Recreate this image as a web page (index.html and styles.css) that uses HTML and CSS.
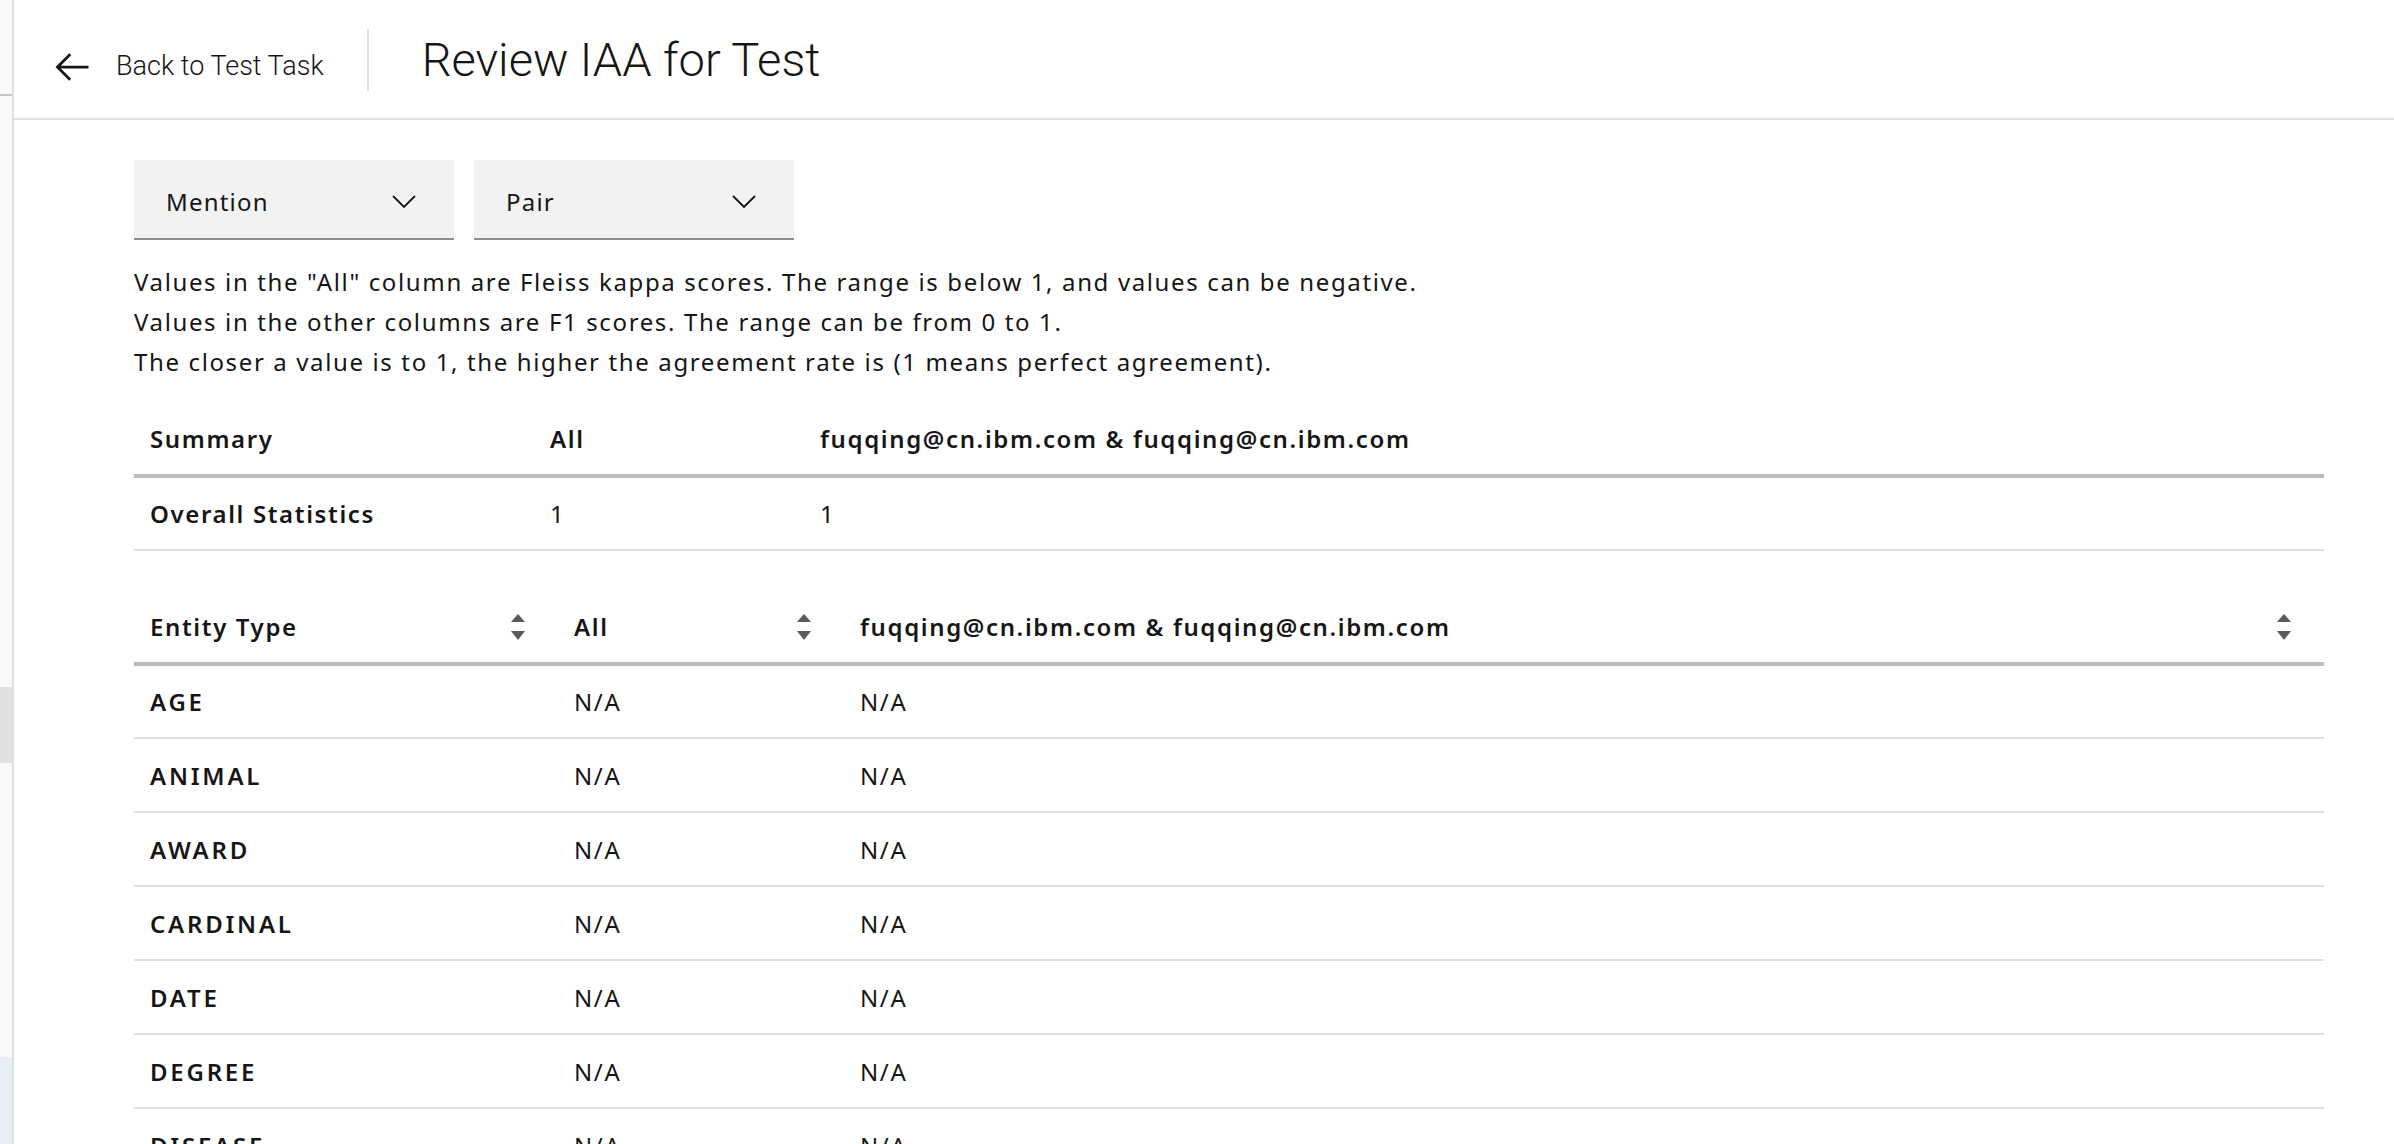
FILE: index.html
```html
<!DOCTYPE html>
<html lang="en">
<head>
<meta charset="utf-8">
<title>Review IAA for Test</title>
<link rel="stylesheet" href="styles.css">
</head>
<body>
<div class="app">
  <aside class="rail">
    <div class="rail-top"></div>
    <div class="rail-space-a"></div>
    <div class="rail-block"></div>
    <div class="rail-space-b"></div>
    <div class="rail-active"></div>
  </aside>
  <main class="main">
    <header class="page-header">
      <a class="back-link" href="#">
        <svg class="back-icon" viewBox="0 0 32 32" aria-hidden="true"><path d="M14 26l1.41-1.41L7.83 17H28v-2H7.83l7.58-7.59L14 6 4 16 14 26z"/></svg>
        <span>Back to Test Task</span>
      </a>
      <div class="header-divider"></div>
      <h1 class="page-title">Review IAA for Test</h1>
    </header>
    <section class="content">
      <div class="filters">
        <div class="dropdown"><span>Mention</span><svg class="chevron" viewBox="0 0 24 13" aria-hidden="true"><polyline points="1,1 12,12 23,1"/></svg></div>
        <div class="dropdown"><span>Pair</span><svg class="chevron" viewBox="0 0 24 13" aria-hidden="true"><polyline points="1,1 12,12 23,1"/></svg></div>
      </div>
      <p class="note">Values in the "All" column are Fleiss kappa scores. The range is below 1, and values can be negative.<br>Values in the other columns are F1 scores. The range can be from 0 to 1.<br>The closer a value is to 1, the higher the agreement rate is (1 means perfect agreement).</p>

      <table class="data-table summary-table">
        <thead>
          <tr><th class="c1">Summary</th><th class="c2">All</th><th>fuqqing@cn.ibm.com &amp; fuqqing@cn.ibm.com</th></tr>
        </thead>
        <tbody>
          <tr><td class="name">Overall Statistics</td><td>1</td><td>1</td></tr>
        </tbody>
      </table>

      <table class="data-table entity-table">
        <thead>
          <tr>
            <th class="e1"><div class="th-inner"><span>Entity Type</span><svg class="sort" viewBox="0 0 14 26" aria-hidden="true"><polygon points="0,8 7,0 14,8"/><polygon points="0,17 14,17 7,26"/></svg></div></th>
            <th class="e2"><div class="th-inner"><span>All</span><svg class="sort" viewBox="0 0 14 26" aria-hidden="true"><polygon points="0,8 7,0 14,8"/><polygon points="0,17 14,17 7,26"/></svg></div></th>
            <th><div class="th-inner"><span>fuqqing@cn.ibm.com &amp; fuqqing@cn.ibm.com</span><svg class="sort" viewBox="0 0 14 26" aria-hidden="true"><polygon points="0,8 7,0 14,8"/><polygon points="0,17 14,17 7,26"/></svg></div></th>
          </tr>
        </thead>
        <tbody>
          <tr><td class="name">AGE</td><td>N/A</td><td>N/A</td></tr>
          <tr><td class="name">ANIMAL</td><td>N/A</td><td>N/A</td></tr>
          <tr><td class="name">AWARD</td><td>N/A</td><td>N/A</td></tr>
          <tr><td class="name">CARDINAL</td><td>N/A</td><td>N/A</td></tr>
          <tr><td class="name">DATE</td><td>N/A</td><td>N/A</td></tr>
          <tr><td class="name">DEGREE</td><td>N/A</td><td>N/A</td></tr>
          <tr><td class="name">DISEASE</td><td>N/A</td><td>N/A</td></tr>
          <tr><td class="name">EVENT</td><td>N/A</td><td>N/A</td></tr>
        </tbody>
      </table>
    </section>
  </main>
</div>
</body>
</html>
```

FILE: styles.css
```css
* { box-sizing: border-box; }

html, body {
  margin: 0;
  padding: 0;
  height: 100%;
  background: #ffffff;
  color: #161616;
  font-family: "Noto Sans", "Open Sans", "Liberation Sans", sans-serif;
}

.app {
  display: flex;
  height: 100vh;
  overflow: hidden;
}

/* collapsed left rail */
.rail {
  flex: 0 0 14px;
  display: flex;
  flex-direction: column;
  background: #f9f9f9;
  border-right: 2px solid #dde1e6;
}
.rail-top { height: 96px; border-bottom: 2px solid #c6c6c6; }
.rail-space-a { height: 591px; }
.rail-block { height: 76px; background: #e0e0e0; }
.rail-space-b { height: 294px; }
.rail-active { flex: 1; background: #e8eef8; }

.main {
  flex: 1;
  min-width: 0;
  display: flex;
  flex-direction: column;
}

/* header */
.page-header {
  height: 120px;
  flex: 0 0 120px;
  border-bottom: 2px solid #e0e0e0;
  display: flex;
  align-items: center;
  padding-left: 36px;
  font-family: Roboto, "Noto Sans", sans-serif;
}
.back-link {
  display: flex;
  align-items: center;
  gap: 22px;
  color: #161616;
  text-decoration: none;
  font-size: 27px;
  font-weight: 300;
  margin-top: 15px;
}
.back-icon { width: 44px; height: 44px; fill: #161616; }
.back-link span { position: relative; top: -1px; }
.header-divider {
  width: 2px;
  height: 62px;
  background: #e0e0e0;
  margin: 2px 53px 0 43px;
}
.page-title {
  margin: 1px 0 0 0;
  font-size: 47px;
  font-weight: 300;
  color: #161616;
}

/* content */
.content {
  padding: 40px 70px 0 120px;
  font-size: 24px;
  letter-spacing: 0.068em;
}
.filters {
  display: flex;
  gap: 20px;
}
.dropdown {
  width: 320px;
  height: 80px;
  background: #f2f2f2;
  border-bottom: 2px solid #8d8d8d;
  display: flex;
  align-items: center;
  justify-content: space-between;
  padding: 5px 38px 0 32px;
  font-size: 24px;
  letter-spacing: 0.05em;
  color: #161616;
}
.chevron {
  width: 24px;
  height: 13px;
  fill: none;
  stroke: #161616;
  stroke-width: 1.8;
}

.note {
  margin: 22px 0 21px 0;
  font-size: 24px;
  line-height: 40px;
  color: #161616;
}

.data-table {
  width: 100%;
  border-collapse: collapse;
  table-layout: fixed;
  font-size: 24px;
  color: #161616;
}
.data-table th {
  height: 73px;
  text-align: left;
  font-weight: 600;
  padding: 0 0 0 16px;
  border-bottom: 4px solid #bdbdbd;
  vertical-align: middle;
}
.data-table td {
  height: 74px;
  padding: 0 0 0 16px;
  border-bottom: 2px solid #e0e0e0;
  vertical-align: middle;
  font-weight: 400;
}
.data-table td.name { font-weight: 600; }
.entity-table td.name { letter-spacing: 0.115em; }

.summary-table .c1 { width: 400px; }
.summary-table .c2 { width: 270px; }

.entity-table { margin-top: 40px; }
.entity-table .e1 { width: 424px; }
.entity-table .e2 { width: 286px; }
.th-inner {
  display: flex;
  align-items: center;
  justify-content: space-between;
  padding-right: 33px;
}
.sort {
  width: 14px;
  height: 26px;
  fill: #5a5a5a;
  flex: 0 0 auto;
}
```
